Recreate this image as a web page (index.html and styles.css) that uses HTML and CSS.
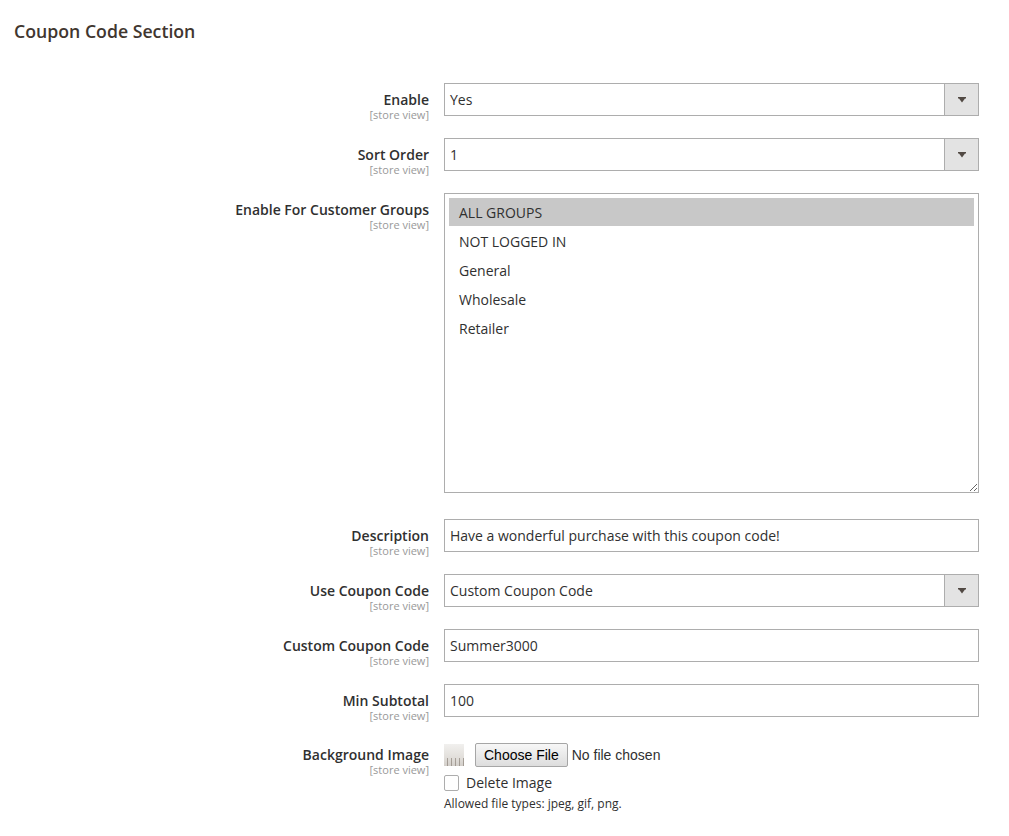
FILE: index.html
```html
<!DOCTYPE html>
<html lang="en">
<head>
<meta charset="utf-8">
<title>Coupon Code Section</title>
<link rel="stylesheet" href="styles.css">
</head>
<body>
<section class="section">
  <h2 class="section-title">Coupon Code Section</h2>
  <div class="form">
    <div class="row">
      <div class="label"><span class="label-text">Enable</span><span class="scope">[store view]</span></div>
      <div class="select"><span class="value">Yes</span><span class="arrow"><svg width="8" height="6" viewBox="0 0 8 6"><path d="M0 0H8V1.5H7L4 5.5L1 1.5H0Z" fill="#514943"/></svg></span></div>
    </div>
    <div class="row">
      <div class="label"><span class="label-text">Sort Order</span><span class="scope">[store view]</span></div>
      <div class="select"><span class="value">1</span><span class="arrow"><svg width="8" height="6" viewBox="0 0 8 6"><path d="M0 0H8V1.5H7L4 5.5L1 1.5H0Z" fill="#514943"/></svg></span></div>
    </div>
    <div class="row row-tall">
      <div class="label"><span class="label-text">Enable For Customer Groups</span><span class="scope">[store view]</span></div>
      <div class="multiselect">
        <div class="option selected">ALL GROUPS</div>
        <div class="option">NOT LOGGED IN</div>
        <div class="option">General</div>
        <div class="option">Wholesale</div>
        <div class="option">Retailer</div>
      </div>
    </div>
    <div class="row">
      <div class="label"><span class="label-text">Description</span><span class="scope">[store view]</span></div>
      <div class="input">Have a wonderful purchase with this coupon code!</div>
    </div>
    <div class="row">
      <div class="label"><span class="label-text">Use Coupon Code</span><span class="scope">[store view]</span></div>
      <div class="select"><span class="value">Custom Coupon Code</span><span class="arrow"><svg width="8" height="6" viewBox="0 0 8 6"><path d="M0 0H8V1.5H7L4 5.5L1 1.5H0Z" fill="#514943"/></svg></span></div>
    </div>
    <div class="row">
      <div class="label"><span class="label-text">Custom Coupon Code</span><span class="scope">[store view]</span></div>
      <div class="input">Summer3000</div>
    </div>
    <div class="row row-before-file">
      <div class="label"><span class="label-text">Min Subtotal</span><span class="scope">[store view]</span></div>
      <div class="input">100</div>
    </div>
    <div class="row row-file">
      <div class="label label-file"><span class="label-text">Background Image</span><span class="scope">[store view]</span></div>
      <div class="file-control">
        <div class="file-line">
          <span class="thumb"></span>
          <input class="file-input" type="file">
        </div>
        <label class="check-line"><span class="checkbox"></span><span>Delete Image</span></label>
        <div class="note">Allowed file types: jpeg, gif, png.</div>
      </div>
    </div>
  </div>
</section>
</body>
</html>
```

FILE: styles.css
```css
html, body {
  margin: 0;
  padding: 0;
  background: #ffffff;
}

body {
  font-family: "Open Sans", "Noto Sans", sans-serif;
  color: #303030;
  width: 1009px;
  height: 836px;
  overflow: hidden;
}

.section {
  padding: 19px 0 0 14px;
}

.section-title {
  margin: 0;
  font-size: 17.7px;
  line-height: 24px;
  font-weight: 600;
  color: #41362f;
}

.form {
  margin-top: 40px;
}

.row {
  display: grid;
  grid-template-columns: 415px 535px;
  column-gap: 15px;
  align-items: start;
  margin-bottom: 17px;
}

.row-tall {
  margin-bottom: 26px;
}

.row-before-file {
  margin-bottom: 21px;
}

.label {
  display: flex;
  flex-direction: column;
  align-items: flex-end;
  text-align: right;
  padding-top: 8px;
}

.label-file {
  padding-top: 3px;
}

.label-text {
  font-size: 14px;
  line-height: 18px;
  font-weight: 600;
  color: #303030;
}

.scope {
  font-size: 11px;
  line-height: 12px;
  color: #999999;
}

.select,
.input {
  box-sizing: border-box;
  height: 33px;
  border: 1px solid #adadad;
  background: #ffffff;
  display: flex;
  align-items: center;
  font-size: 14px;
  color: #303030;
}

.input {
  padding-left: 5px;
}

.select .value {
  flex: 1;
  padding-left: 5px;
}

.arrow {
  width: 33px;
  height: 100%;
  border-left: 1px solid #adadad;
  background: #e3e3e3;
  display: flex;
  align-items: center;
  justify-content: center;
}

.arrow svg {
  display: block;
  margin-left: 1px;
}

.multiselect {
  box-sizing: border-box;
  height: 300px;
  border: 1px solid #adadad;
  padding: 4px;
  resize: both;
  overflow: hidden;
  font-size: 14px;
  color: #303030;
}

.option {
  height: 28px;
  line-height: 30px;
  margin-bottom: 1px;
  padding-left: 10px;
}

.option.selected {
  background: #c8c8c8;
}

.file-control {
  display: flex;
  flex-direction: column;
  align-items: flex-start;
}

.file-line {
  display: flex;
  align-items: center;
  height: 24px;
}

.thumb {
  width: 20px;
  height: 22px;
  margin-right: 11px;
  background:
    repeating-linear-gradient(90deg, transparent 0 3px, rgba(120,110,100,0.55) 3px 4px) bottom / 100% 8px no-repeat,
    linear-gradient(180deg, #f1f0ee 0%, #e2dfdb 60%, #d3cfca 100%);
}

.file-input {
  font-family: "Liberation Sans", Arial, sans-serif;
  font-size: 14px;
  color: #303030;
  margin: 0;
}

.file-input::file-selector-button {
  font-family: "Liberation Sans", Arial, sans-serif;
  font-size: 14px;
  color: #000000;
  height: 24px;
  padding: 0 8px;
  margin: 0 4px 0 0;
  border: 1px solid #a6a6a6;
  border-radius: 2px;
  background: linear-gradient(180deg, #f7f7f7 0%, #dddddd 100%);
}

.check-line {
  display: flex;
  align-items: center;
  margin-top: 6px;
  font-size: 14px;
  line-height: 19px;
  color: #303030;
}

.checkbox {
  box-sizing: border-box;
  width: 15px;
  height: 16px;
  border: 1px solid #adadad;
  border-radius: 2px;
  background: #ffffff;
  margin-right: 7px;
}

.note {
  margin-top: 3px;
  font-size: 12px;
  line-height: 17px;
  color: #303030;
}
```
